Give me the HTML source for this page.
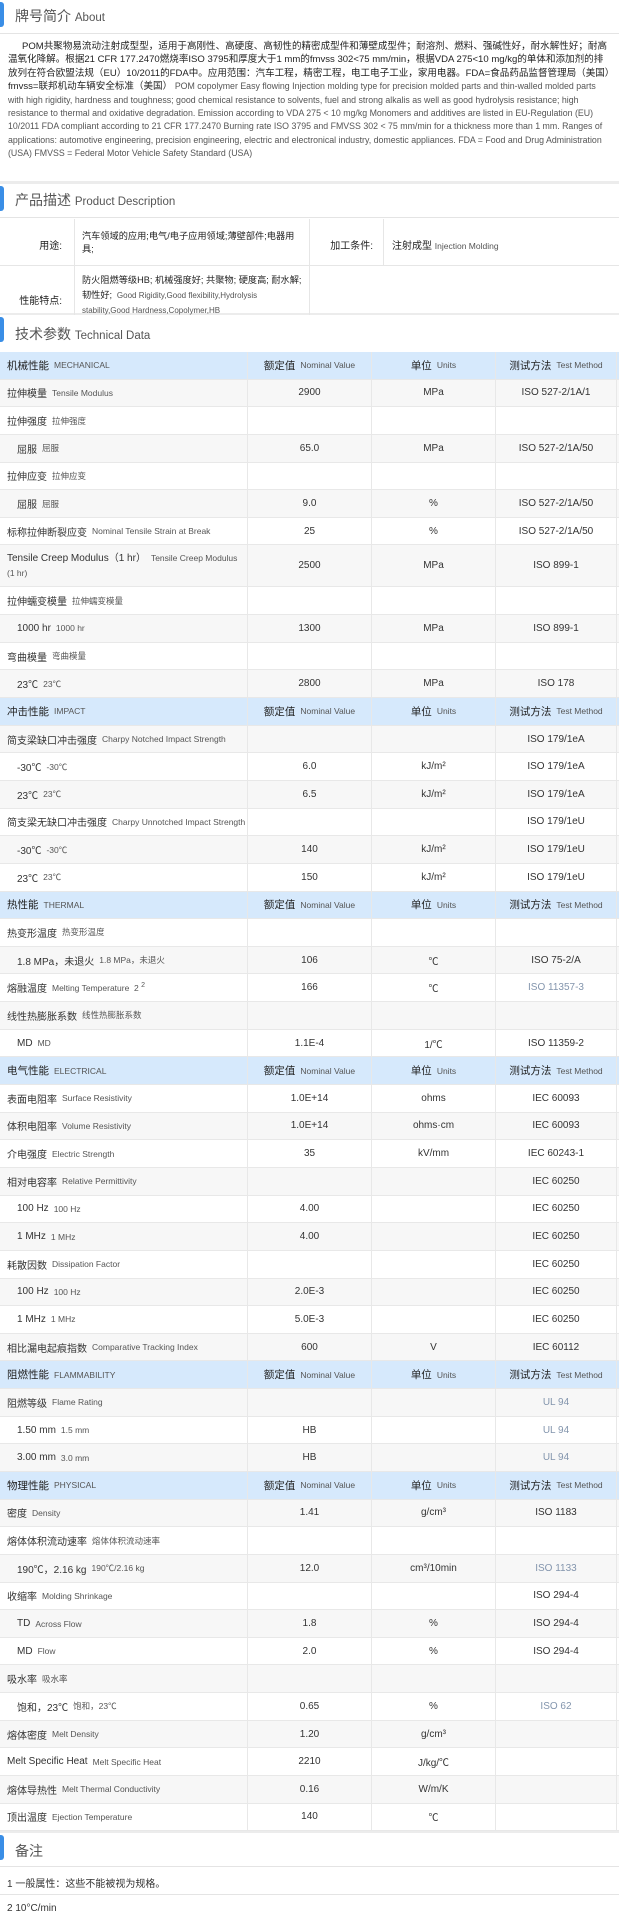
<!DOCTYPE html>
<html><head><meta charset="utf-8"><style>
*{margin:0;padding:0;box-sizing:border-box}
body{width:619px;height:1922px;background:#ececec;font-family:"Liberation Sans","Noto Sans CJK SC",sans-serif;color:#222;overflow:hidden;position:relative}
.sec{background:#fff;position:absolute;left:0;width:619px}
.ttl{position:relative;height:34px;border-bottom:1px solid #e4e4e4}
.ttl:before{content:"";position:absolute;left:0;top:2px;width:4px;height:25px;background:#3a8ee6;border-radius:0 3px 3px 0}
.ttl h2{position:absolute;left:15px;top:6px;font-size:14px;font-weight:normal;color:#555}
.ttl h2 small{font-size:11.5px}
.about p{padding:6px 8px 0 8px;font-size:9.55px;line-height:13.4px;color:#222;text-indent:14px}
.about p span{color:#555;font-size:8.8px}
.pd{position:absolute;top:35px;left:0;width:619px;font-size:10px}
.pd div{position:absolute;border-right:1px solid #e6e6e6;border-bottom:1px solid #e6e6e6}
.row{display:flex;height:27.65px;border-bottom:1px solid #e8e8e8;font-size:10px;align-items:stretch}
.row>div{display:flex;align-items:center;border-right:1px solid #e8e8e8;justify-content:center;color:#333}
.row>div:nth-child(1){width:248px;justify-content:flex-start;padding-left:7px}
.row>div:nth-child(2){width:124px}
.row>div:nth-child(3){width:124px}
.row>div:nth-child(4){width:121px}
.row:nth-child(even){background:#f7f7f7}
.row.h{background:#d6e9fc!important}
.row .s{font-size:8.5px;color:#555;margin-left:5px}
.row.i>div:nth-child(1){padding-left:17px}
.lk{color:#8395ad!important}
.row.h>div span.m{color:#222;font-size:10.5px}
</style></head><body>

<div class="sec about" style="top:0;height:181px">
<div class="ttl"><h2>牌号简介 <small>About</small></h2></div>
<p>POM共聚物易流动注射成型型，适用于高刚性、高硬度、高韧性的精密成型件和薄壁成型件；耐溶剂、燃料、强碱性好，耐水解性好；耐高温氧化降解。根据21 CFR 177.2470燃烧率ISO 3795和厚度大于1 mm的fmvss 302&lt;75 mm/min，根据VDA 275&lt;10 mg/kg的单体和添加剂的排放列在符合欧盟法规（EU）10/2011的FDA中。应用范围：汽车工程，精密工程，电工电子工业，家用电器。FDA=食品药品监督管理局（美国）fmvss=联邦机动车辆安全标准（美国） <span>POM copolymer Easy flowing Injection molding type for precision molded parts and thin-walled molded parts with high rigidity, hardness and toughness; good chemical resistance to solvents, fuel and strong alkalis as well as good hydrolysis resistance; high resistance to thermal and oxidative degradation. Emission according to VDA 275 &lt; 10 mg/kg Monomers and additives are listed in EU-Regulation (EU) 10/2011 FDA compliant according to 21 CFR 177.2470 Burning rate ISO 3795 and FMVSS 302 &lt; 75 mm/min for a thickness more than 1 mm. Ranges of applications: automotive engineering, precision engineering, electric and electronical industry, domestic appliances. FDA = Food and Drug Administration (USA) FMVSS = Federal Motor Vehicle Safety Standard (USA)</span></p>
</div>

<div class="sec" style="top:184px;height:129px">
<div class="ttl"><h2>产品描述 <small>Product Description</small></h2></div>
<div class="pd">
<div style="left:0;top:0;width:75px;height:47px;text-align:right;padding:18px 12px 0 0">用途:</div>
<div style="left:75px;top:0;width:235px;height:47px;padding:11px 6px 0 7px;line-height:13px;font-size:9.2px">汽车领域的应用;电气/电子应用领域;薄壁部件;电器用具;</div>
<div style="left:310px;top:0;width:74px;height:47px;text-align:right;padding:18px 10px 0 0">加工条件:</div>
<div style="left:384px;top:0;width:235px;height:47px;padding:18px 0 0 8px;border-right:none">注射成型 <span style="font-size:8.5px;color:#555">Injection Molding</span></div>
<div style="left:0;top:47px;width:75px;height:65px;text-align:right;padding:26px 12px 0 0">性能特点:</div>
<div style="left:75px;top:47px;width:235px;height:65px;padding:7px 4px 0 7px;line-height:15px;font-size:9.2px">防火阻燃等级HB; 机械强度好; 共聚物; 硬度高; 耐水解; 韧性好; <span style="font-size:8px;color:#555">&nbsp;Good Rigidity,Good flexibility,Hydrolysis stability,Good Hardness,Copolymer,HB</span></div>
</div>
</div>

<div class="sec" style="top:315px;height:1516px">
<div class="ttl" style="height:37px;border-bottom:none"><h2 style="top:9px">技术参数 <small>Technical Data</small></h2></div>
<div style="position:absolute;top:37px;left:0;width:619px">
<div class="row h"><div><span class="m">机械性能</span><span class="s">MECHANICAL</span></div><div><span class="m">额定值</span><span class="s">Nominal Value</span></div><div><span class="m">单位</span><span class="s">Units</span></div><div><span class="m">测试方法</span><span class="s">Test Method</span></div></div>
<div class="row"><div>拉伸模量<span class="s">Tensile Modulus</span></div><div>2900</div><div>MPa</div><div>ISO 527-2/1A/1</div></div>
<div class="row"><div>拉伸强度<span class="s">拉伸强度</span></div><div></div><div></div><div></div></div>
<div class="row i"><div>屈服<span class="s">屈服</span></div><div>65.0</div><div>MPa</div><div>ISO 527-2/1A/50</div></div>
<div class="row"><div>拉伸应变<span class="s">拉伸应变</span></div><div></div><div></div><div></div></div>
<div class="row i"><div>屈服<span class="s">屈服</span></div><div>9.0</div><div>%</div><div>ISO 527-2/1A/50</div></div>
<div class="row"><div>标称拉伸断裂应变<span class="s">Nominal Tensile Strain at Break</span></div><div>25</div><div>%</div><div>ISO 527-2/1A/50</div></div>
<div class="row" style="height:42px"><div style="display:block;padding-top:6px;line-height:14px">Tensile Creep Modulus（1 hr）<span class="s">Tensile Creep Modulus (1 hr)</span></div><div>2500</div><div>MPa</div><div>ISO 899-1</div></div>
<div class="row"><div>拉伸蠕变模量<span class="s">拉伸蠕变模量</span></div><div></div><div></div><div></div></div>
<div class="row i"><div>1000 hr<span class="s">1000 hr</span></div><div>1300</div><div>MPa</div><div>ISO 899-1</div></div>
<div class="row"><div>弯曲模量<span class="s">弯曲模量</span></div><div></div><div></div><div></div></div>
<div class="row i"><div>23℃<span class="s">23℃</span></div><div>2800</div><div>MPa</div><div>ISO 178</div></div>
<div class="row h"><div><span class="m">冲击性能</span><span class="s">IMPACT</span></div><div><span class="m">额定值</span><span class="s">Nominal Value</span></div><div><span class="m">单位</span><span class="s">Units</span></div><div><span class="m">测试方法</span><span class="s">Test Method</span></div></div>
<div class="row"><div>简支梁缺口冲击强度<span class="s">Charpy Notched Impact Strength</span></div><div></div><div></div><div>ISO 179/1eA</div></div>
<div class="row i"><div>-30℃<span class="s">-30℃</span></div><div>6.0</div><div>kJ/m²</div><div>ISO 179/1eA</div></div>
<div class="row i"><div>23℃<span class="s">23℃</span></div><div>6.5</div><div>kJ/m²</div><div>ISO 179/1eA</div></div>
<div class="row"><div>简支梁无缺口冲击强度<span class="s">Charpy Unnotched Impact Strength</span></div><div></div><div></div><div>ISO 179/1eU</div></div>
<div class="row i"><div>-30℃<span class="s">-30℃</span></div><div>140</div><div>kJ/m²</div><div>ISO 179/1eU</div></div>
<div class="row i"><div>23℃<span class="s">23℃</span></div><div>150</div><div>kJ/m²</div><div>ISO 179/1eU</div></div>
<div class="row h"><div><span class="m">热性能</span><span class="s">THERMAL</span></div><div><span class="m">额定值</span><span class="s">Nominal Value</span></div><div><span class="m">单位</span><span class="s">Units</span></div><div><span class="m">测试方法</span><span class="s">Test Method</span></div></div>
<div class="row"><div>热变形温度<span class="s">热变形温度</span></div><div></div><div></div><div></div></div>
<div class="row i"><div>1.8 MPa，未退火<span class="s">1.8 MPa，未退火</span></div><div>106</div><div>℃</div><div>ISO 75-2/A</div></div>
<div class="row"><div>熔融温度<span class="s">Melting Temperature &nbsp;2 <sup style="font-size:7px">2</sup></span></div><div>166</div><div>℃</div><div class="lk">ISO 11357-3</div></div>
<div class="row"><div>线性热膨胀系数<span class="s">线性热膨胀系数</span></div><div></div><div></div><div></div></div>
<div class="row i"><div>MD<span class="s">MD</span></div><div>1.1E-4</div><div>1/℃</div><div>ISO 11359-2</div></div>
<div class="row h"><div><span class="m">电气性能</span><span class="s">ELECTRICAL</span></div><div><span class="m">额定值</span><span class="s">Nominal Value</span></div><div><span class="m">单位</span><span class="s">Units</span></div><div><span class="m">测试方法</span><span class="s">Test Method</span></div></div>
<div class="row"><div>表面电阻率<span class="s">Surface Resistivity</span></div><div>1.0E+14</div><div>ohms</div><div>IEC 60093</div></div>
<div class="row"><div>体积电阻率<span class="s">Volume Resistivity</span></div><div>1.0E+14</div><div>ohms·cm</div><div>IEC 60093</div></div>
<div class="row"><div>介电强度<span class="s">Electric Strength</span></div><div>35</div><div>kV/mm</div><div>IEC 60243-1</div></div>
<div class="row"><div>相对电容率<span class="s">Relative Permittivity</span></div><div></div><div></div><div>IEC 60250</div></div>
<div class="row i"><div>100 Hz<span class="s">100 Hz</span></div><div>4.00</div><div></div><div>IEC 60250</div></div>
<div class="row i"><div>1 MHz<span class="s">1 MHz</span></div><div>4.00</div><div></div><div>IEC 60250</div></div>
<div class="row"><div>耗散因数<span class="s">Dissipation Factor</span></div><div></div><div></div><div>IEC 60250</div></div>
<div class="row i"><div>100 Hz<span class="s">100 Hz</span></div><div>2.0E-3</div><div></div><div>IEC 60250</div></div>
<div class="row i"><div>1 MHz<span class="s">1 MHz</span></div><div>5.0E-3</div><div></div><div>IEC 60250</div></div>
<div class="row"><div>相比漏电起痕指数<span class="s">Comparative Tracking Index</span></div><div>600</div><div>V</div><div>IEC 60112</div></div>
<div class="row h"><div><span class="m">阻燃性能</span><span class="s">FLAMMABILITY</span></div><div><span class="m">额定值</span><span class="s">Nominal Value</span></div><div><span class="m">单位</span><span class="s">Units</span></div><div><span class="m">测试方法</span><span class="s">Test Method</span></div></div>
<div class="row"><div>阻燃等级<span class="s">Flame Rating</span></div><div></div><div></div><div class="lk">UL 94</div></div>
<div class="row i"><div>1.50 mm<span class="s">1.5 mm</span></div><div>HB</div><div></div><div class="lk">UL 94</div></div>
<div class="row i"><div>3.00 mm<span class="s">3.0 mm</span></div><div>HB</div><div></div><div class="lk">UL 94</div></div>
<div class="row h"><div><span class="m">物理性能</span><span class="s">PHYSICAL</span></div><div><span class="m">额定值</span><span class="s">Nominal Value</span></div><div><span class="m">单位</span><span class="s">Units</span></div><div><span class="m">测试方法</span><span class="s">Test Method</span></div></div>
<div class="row"><div>密度<span class="s">Density</span></div><div>1.41</div><div>g/cm³</div><div>ISO 1183</div></div>
<div class="row"><div>熔体体积流动速率<span class="s">熔体体积流动速率</span></div><div></div><div></div><div></div></div>
<div class="row i"><div>190℃，2.16 kg<span class="s">190℃/2.16 kg</span></div><div>12.0</div><div>cm³/10min</div><div class="lk">ISO 1133</div></div>
<div class="row"><div>收缩率<span class="s">Molding Shrinkage</span></div><div></div><div></div><div>ISO 294-4</div></div>
<div class="row i"><div>TD<span class="s">Across Flow</span></div><div>1.8</div><div>%</div><div>ISO 294-4</div></div>
<div class="row i"><div>MD<span class="s">Flow</span></div><div>2.0</div><div>%</div><div>ISO 294-4</div></div>
<div class="row"><div>吸水率<span class="s">吸水率</span></div><div></div><div></div><div></div></div>
<div class="row i"><div>饱和，23℃<span class="s">饱和，23℃</span></div><div>0.65</div><div>%</div><div class="lk">ISO 62</div></div>
<div class="row"><div>熔体密度<span class="s">Melt Density</span></div><div>1.20</div><div>g/cm³</div><div></div></div>
<div class="row"><div>Melt Specific Heat<span class="s">Melt Specific Heat</span></div><div>2210</div><div>J/kg/℃</div><div></div></div>
<div class="row"><div>熔体导热性<span class="s">Melt Thermal Conductivity</span></div><div>0.16</div><div>W/m/K</div><div></div></div>
<div class="row"><div>顶出温度<span class="s">Ejection Temperature</span></div><div>140</div><div>℃</div><div></div></div>
</div>
</div>

<div class="sec" style="top:1833px;height:89px">
<div class="ttl"><h2 style="top:8px">备注</h2></div>
<div style="height:28px;border-bottom:1px solid #e4e4e4;font-size:10px;padding:8px 0 0 7px;color:#333">1 一般属性：这些不能被视为规格。</div>
<div style="font-size:10px;padding:8px 0 0 7px;color:#333">2 10°C/min</div>
</div>
</body></html>
